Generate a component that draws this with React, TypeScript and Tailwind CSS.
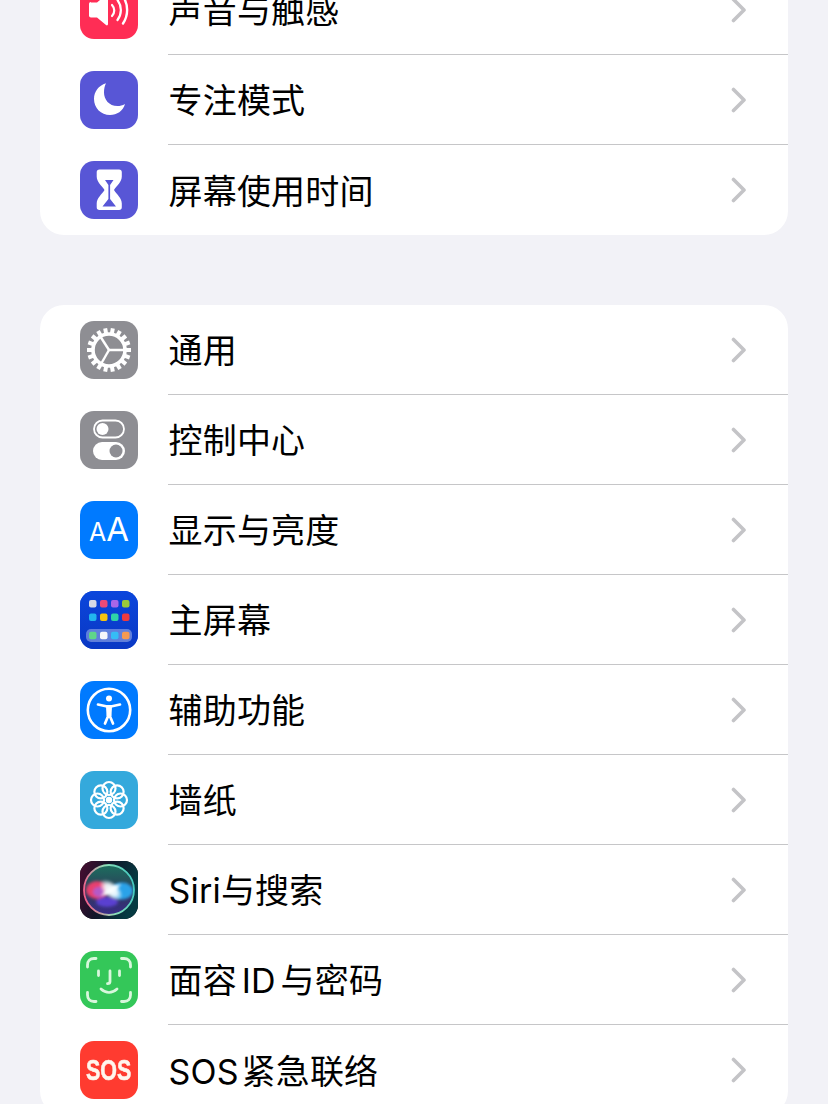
import React from "react";

const Sound = () => (
  <svg viewBox="0 0 58 58" className="w-full h-full">
    <path d="M11 21.500h6L26 14c1-.8 2-.3 2 1v28c0 1.300-1 1.800-2 1l-9-7.500h-6c-1.200 0-2-.8-2-2v-11.500c0-1.200.8-2 2-2z" fill="#fff" />
    <g fill="none" stroke="#fff" strokeLinecap="round">
      <path d="M32 24c3 3.200 3 7.800 0 11" strokeWidth="2.200" />
      <path d="M37.500 19c4.500 6 4.500 14 0 20" strokeWidth="2.200" />
      <path d="M43 15.500c5.500 8 5.500 19 0 27" strokeWidth="2.400" />
    </g>
  </svg>
);

const Moon = () => (
  <svg viewBox="0 0 58 58" className="w-full h-full">
    <path d="M26 12.300C18.500 14.500 14 21 14 28c0 9 7 16 16 16 7 0 13-4 15-11-2.500 1.500-5 2-7.500 2C29 35 24 28.500 24 21.500c0-3.500.7-6.500 2-9.200z" fill="#fff" />
  </svg>
);

const Hourglass = () => (
  <svg viewBox="0 0 58 58" className="w-full h-full">
    <path fill="#fff" d="M19.500 8.500h19.500c1.800 0 2.800 1 2.800 2.800v4.200c0 5.500-5 9-7.800 13.500 2.800 4.500 7.800 8 7.800 13.500v3.700c0 1.800-1 2.800-2.800 2.800H19.500c-1.800 0-2.800-1-2.800-2.800v-3.700c0-5.500 5-9 7.800-13.500-2.800-4.500-7.800-8-7.800-13.500v-4.200c0-1.800 1-2.800 2.800-2.800z" />
    <path fill="#5856d6" d="M25 19h8.500l-3.400 5v14l5.900 7.500H22.500l5.900-7.500V24z" />
  </svg>
);

const Gear = () => (
  <svg viewBox="0 0 58 58" className="w-full h-full">
    <g stroke="#fff" strokeWidth="4" strokeLinecap="butt">
      {Array.from({ length: 18 }).map((_, i) => {
        const a = (i * 20 * Math.PI) / 180;
        return (
          <line key={i} x1={29 + 15 * Math.cos(a)} y1={29 + 15 * Math.sin(a)} x2={29 + 22 * Math.cos(a)} y2={29 + 22 * Math.sin(a)} />
        );
      })}
    </g>
    <circle cx="29" cy="29" r="16" fill="none" stroke="#fff" strokeWidth="3.600" />
    <g stroke="#fff" strokeWidth="2.400">
      <line x1="29" y1="29" x2="44" y2="29" />
      <line x1="29" y1="29" x2="20" y2="15" />
      <line x1="29" y1="29" x2="21" y2="43" />
    </g>
  </svg>
);

const Toggles = () => (
  <svg viewBox="0 0 58 58" className="w-full h-full">
    <rect x="14" y="9.500" width="30" height="17" rx="8.500" fill="none" stroke="#fff" strokeWidth="1.800" />
    <circle cx="22.500" cy="18" r="6" fill="#fff" />
    <rect x="13" y="31" width="32" height="18" rx="9" fill="#fff" />
    <circle cx="36" cy="40" r="6.500" fill="#8e8e93" />
  </svg>
);

const HomeScreen = () => {
  const top = ["#d6dbe6", "#ec4a78", "#a866e8", "#9ccb3c", "#22b6ee", "#f6c40f", "#2fd3a8", "#f03a3e"];
  const dock = ["#5fd68a", "#f4f6fa", "#35bdf5", "#f39a52"];
  return (
    <svg viewBox="0 0 58 58" className="w-full h-full">
      <defs>
        <linearGradient id="hs" x1="0" y1="0" x2="0" y2="1">
          <stop offset="0" stopColor="#0b46dc" />
          <stop offset="1" stopColor="#0a38c4" />
        </linearGradient>
      </defs>
      <rect width="58" height="58" fill="url(#hs)" />
      {top.map((c, i) => (
        <rect key={i} x={9 + (i % 4) * 11} y={9 + Math.floor(i / 4) * 13.500} width="7.500" height="7.500" rx="2" fill={c} />
      ))}
      <rect x="6" y="38" width="46" height="13" rx="5" fill="#ffffff" fillOpacity="0.35" />
      {dock.map((c, i) => (
        <rect key={i} x={9 + i * 11} y="40.800" width="7.500" height="7.500" rx="2" fill={c} />
      ))}
    </svg>
  );
};

const Access = () => (
  <svg viewBox="0 0 58 58" className="w-full h-full">
    <circle cx="29" cy="29" r="21.200" fill="none" stroke="#fff" strokeWidth="2.600" />
    <circle cx="29" cy="17.500" r="3" fill="#fff" />
    <path d="M18 23.500l8 1.800h6l8-1.800M29 25.500v9M29 33l-4 9.500M29 33l4 9.500" fill="none" stroke="#fff" strokeWidth="2.700" strokeLinecap="round" strokeLinejoin="round" />
    <path d="M26 25h6l-.5 10h-5z" fill="#fff" />
  </svg>
);

const Flower = () => (
  <svg viewBox="0 0 58 58" className="w-full h-full">
    <g fill="none" stroke="#fff" strokeWidth="2.200">
      {Array.from({ length: 8 }).map((_, i) => {
        const a = (i * 45 * Math.PI) / 180;
        return <circle key={i} cx={29 + 11.500 * Math.cos(a)} cy={29 + 11.500 * Math.sin(a)} r="6.500" />;
      })}
    </g>
    <circle cx="29" cy="29" r="3.200" fill="#fff" />
  </svg>
);

const Siri = () => (
  <svg viewBox="0 0 58 58" className="w-full h-full">
    <defs>
      <linearGradient id="bgl" x1="0" y1="0" x2="1" y2="0.300">
        <stop offset="0" stopColor="#4a0d30" />
        <stop offset="0.5" stopColor="#101528" />
        <stop offset="1" stopColor="#053a42" />
      </linearGradient>
      <linearGradient id="sdisc" x1="0.500" y1="0" x2="0.500" y2="1">
        <stop offset="0" stopColor="#1c6f5e" />
        <stop offset="0.55" stopColor="#2d3a5a" />
        <stop offset="1" stopColor="#3a2a8a" />
      </linearGradient>
      <radialGradient id="sw">
        <stop offset="0" stopColor="#ffffff" />
        <stop offset="0.5" stopColor="#f4fcff" stopOpacity="0.9" />
        <stop offset="1" stopColor="#ffffff" stopOpacity="0" />
      </radialGradient>
      <linearGradient id="sring" x1="0" y1="0.500" x2="1" y2="0.300">
        <stop offset="0" stopColor="#f0608c" />
        <stop offset="0.5" stopColor="#8fe0b8" />
        <stop offset="1" stopColor="#3fc8c0" />
      </linearGradient>
      <filter id="sb" x="-30%" y="-30%" width="160%" height="160%">
        <feGaussianBlur stdDeviation="1.500" />
      </filter>
      <filter id="sc" x="-30%" y="-30%" width="160%" height="160%">
        <feGaussianBlur stdDeviation="0.800" />
      </filter>
    </defs>
    <rect width="58" height="58" fill="url(#bgl)" />
    <circle cx="29" cy="29" r="25" fill="url(#sdisc)" />
    <g filter="url(#sb)">
      <ellipse cx="17" cy="29" rx="11" ry="9" fill="#e8406e" />
      <ellipse cx="19" cy="31" rx="6" ry="5" fill="#b45ac8" />
      <ellipse cx="42" cy="30" rx="11" ry="8.500" fill="#2aa2e8" />
      <ellipse cx="27" cy="41" rx="11" ry="5" fill="#5a3fd0" />
    </g>
    <circle cx="29" cy="29" r="25" fill="none" stroke="url(#sring)" strokeWidth="1.800" />
    <g filter="url(#sc)">
      <ellipse cx="31" cy="29" rx="14" ry="8" fill="url(#sw)" transform="rotate(40 31 29)" />
      <ellipse cx="31" cy="29" rx="13" ry="3.500" fill="url(#sw)" transform="rotate(-30 31 29)" />
    </g>
  </svg>
);

const Face = () => (
  <svg viewBox="0 0 58 58" className="w-full h-full">
    <g fill="none" stroke="#d8f7dc" strokeWidth="2.800" strokeLinecap="round" strokeLinejoin="round">
      <path d="M7.500 16v-2c0-4 2.500-6.500 6.500-6.500h2" />
      <path d="M41.500 7.500h2.500c4 0 6.500 2.500 6.500 6.500v2" />
      <path d="M7.500 41.500v2.500c0 4 2.500 6.500 6.500 6.500h2" />
      <path d="M41.500 50.500h2.500c4 0 6.500-2.500 6.500-6.500v-2.500" />
      <path d="M18.500 20v4.500M39.500 20v4.500" />
      <path d="M30 20v10.500c0 1.500-1 2.200-2.500 2.200" />
      <path d="M21 38c5 4.500 11 4.500 16 0" />
    </g>
  </svg>
);

type Row = { label: string; bg: string; icon: React.ReactNode; last?: boolean; extra?: string };

const groupA: Row[] = [
  { label: "声音与触感", bg: "bg-[#ff2d55]", icon: <Sound /> },
  { label: "专注模式", bg: "bg-[#5856d6]", icon: <Moon /> },
  { label: "屏幕使用时间", bg: "bg-[#5856d6]", icon: <Hourglass />, last: true },
];

const groupB: Row[] = [
  { label: "通用", bg: "bg-[#8e8e93]", icon: <Gear /> },
  { label: "控制中心", bg: "bg-[#8e8e93]", icon: <Toggles /> },
  {
    label: "显示与亮度",
    bg: "bg-[#007aff]",
    icon: (
      <span className="flex h-full w-full items-baseline justify-center pt-3 font-['Inter',sans-serif] font-normal leading-none text-white">
        <span className="text-[25px]">A</span>
        <span className="text-[33px]">A</span>
      </span>
    ),
  },
  { label: "主屏幕", bg: "bg-[#0a40d0]", icon: <HomeScreen /> },
  { label: "辅助功能", bg: "bg-[#007aff]", icon: <Access /> },
  { label: "墙纸", bg: "bg-[#34a9dc]", icon: <Flower /> },
  { label: "Siri与搜索", bg: "bg-black", icon: <Siri /> },
  { label: "面容 ID 与密码", bg: "bg-[#34c759]", icon: <Face />, extra: "[word-spacing:-5px]" },
  {
    label: "SOS 紧急联络",
    bg: "bg-[#ff3b30]",
    icon: (
      <span className="flex h-full w-full items-center justify-center font-['Liberation_Sans',sans-serif] text-[29px] font-bold leading-none text-[#fff6ee] [-webkit-text-stroke:0.6px_#fff6ee]">
        <span className="scale-x-[0.74]">SOS</span>
      </span>
    ),
    last: true,
    extra: "[word-spacing:-7px]",
  },
];

const Chevron = () => (
  <svg viewBox="0 0 16 26" className="h-[26px] w-4 shrink-0">
    <path d="M2.500 2.500L13 13 2.500 23.500" fill="none" stroke="#c4c4c7" strokeWidth="3.600" strokeLinecap="round" strokeLinejoin="round" />
  </svg>
);

const SettingsRow = ({ row }: { row: Row }) => (
  <div className="flex h-[90px] items-center pl-10">
    <div className={`h-[58px] w-[58px] shrink-0 overflow-hidden rounded-[14px] ${row.bg}`}>{row.icon}</div>
    <div className={`ml-[30px] flex h-full flex-1 items-center justify-between pl-[0.5px] pr-[41px] ${row.last ? "" : "border-b border-[#c6c6c8]"}`}>
      <span className={`pt-[3px] text-[34px] leading-none tracking-[0.2px] text-black ${row.extra ?? ""}`}>{row.label}</span>
      <Chevron />
    </div>
  </div>
);

export default function App() {
  return (
    <div className="h-[1104px] w-[828px] overflow-hidden bg-[#f2f2f7] px-10 font-['Inter','Noto_Sans_CJK_SC',sans-serif]">
      <div className="-mt-[35px] flex flex-col gap-[70px]">
        <div className="overflow-hidden rounded-[24px] bg-white">
          {groupA.map((r) => (
            <SettingsRow key={r.label} row={r} />
          ))}
        </div>
        <div className="overflow-hidden rounded-[24px] bg-white">
          {groupB.map((r) => (
            <SettingsRow key={r.label} row={r} />
          ))}
        </div>
      </div>
    </div>
  );
}
